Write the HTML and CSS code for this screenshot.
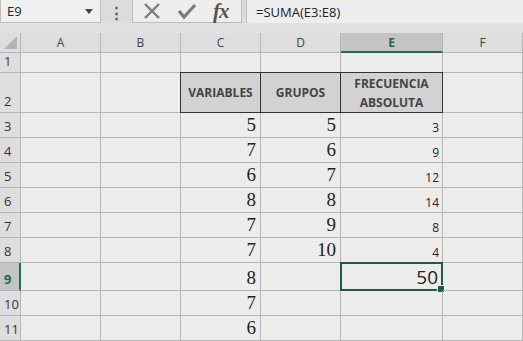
FILE: index.html
```html
<!doctype html>
<html lang="es">
<head>
    <meta charset="UTF-8">
    <title>Hoja de cálculo</title>
    <link rel="stylesheet" href="styles.css">
</head>
<body>
<div class="app">
    <div class="formula-bar">
        <div class="name-box">
            <span>E9</span>
            <svg class="caret" width="8" height="5" viewBox="0 0 8 5"><path d="M0 0h8L4 5z" fill="#444"/></svg>
        </div>
        <div class="dots">&#8942;</div>
        <div class="actions">
            <svg class="icon" width="18" height="18" viewBox="0 0 18 18"><path d="M2 2L16 16M16 2L2 16" stroke="#7a7a7a" stroke-width="2.4"/></svg>
            <svg class="icon" width="20" height="18" viewBox="0 0 20 18"><path d="M2 9l5 6L18 3" stroke="#7a7a7a" stroke-width="3.2" fill="none"/></svg>
            <span class="fx">fx</span>
        </div>
        <div class="formula">=SUMA(E3:E8)</div>
    </div>

    <div class="sheet">
        <div class="corner"><svg width="13" height="13" viewBox="0 0 13 13"><path d="M13 0V13H0z" fill="#b3b3b3"/></svg></div>
        <div class="col-head">A</div>
        <div class="col-head">B</div>
        <div class="col-head">C</div>
        <div class="col-head">D</div>
        <div class="col-head active">E</div>
        <div class="col-head">F</div>

        <div class="row-head">1</div>
        <div class="cell"></div><div class="cell"></div><div class="cell"></div><div class="cell"></div><div class="cell"></div><div class="cell"></div>

        <div class="row-head">2</div>
        <div class="cell"></div><div class="cell"></div>
        <div class="cell title first">VARIABLES</div>
        <div class="cell title">GRUPOS</div>
        <div class="cell title">FRECUENCIA<br>ABSOLUTA</div>
        <div class="cell"></div>

        <div class="row-head">3</div>
        <div class="cell"></div><div class="cell"></div>
        <div class="cell serif">5</div><div class="cell serif">5</div><div class="cell small">3</div><div class="cell"></div>

        <div class="row-head">4</div>
        <div class="cell"></div><div class="cell"></div>
        <div class="cell serif">7</div><div class="cell serif">6</div><div class="cell small">9</div><div class="cell"></div>

        <div class="row-head">5</div>
        <div class="cell"></div><div class="cell"></div>
        <div class="cell serif">6</div><div class="cell serif">7</div><div class="cell small">12</div><div class="cell"></div>

        <div class="row-head">6</div>
        <div class="cell"></div><div class="cell"></div>
        <div class="cell serif">8</div><div class="cell serif">8</div><div class="cell small">14</div><div class="cell"></div>

        <div class="row-head">7</div>
        <div class="cell"></div><div class="cell"></div>
        <div class="cell serif">7</div><div class="cell serif">9</div><div class="cell small">8</div><div class="cell"></div>

        <div class="row-head">8</div>
        <div class="cell"></div><div class="cell"></div>
        <div class="cell serif">7</div><div class="cell serif">10</div><div class="cell small">4</div><div class="cell"></div>

        <div class="row-head active">9</div>
        <div class="cell"></div><div class="cell"></div>
        <div class="cell serif">8</div><div class="cell"></div>
        <div class="cell selected">50<span class="handle"></span></div>
        <div class="cell"></div>

        <div class="row-head">10</div>
        <div class="cell"></div><div class="cell"></div>
        <div class="cell serif">7</div><div class="cell"></div><div class="cell"></div><div class="cell"></div>

        <div class="row-head">11</div>
        <div class="cell"></div><div class="cell"></div>
        <div class="cell serif">6</div><div class="cell"></div><div class="cell"></div><div class="cell"></div>
    </div>
</div>
</body>
</html>
```

FILE: styles.css
```css
body {
    margin: 0;
    overflow: hidden;
    font-family: "Open Sans", "Liberation Sans", sans-serif;
    background: #e2e2e2;
}

.app {
    width: 523px;
    height: 341px;
    overflow: hidden;
}

.formula-bar {
    display: flex;
    align-items: stretch;
    height: 23px;
    margin-bottom: 10px;
    background: #dcdcdc;
}

.name-box {
    display: flex;
    align-items: center;
    justify-content: space-between;
    width: 101px;
    padding: 0 7px 0 6px;
    box-sizing: border-box;
    background: #f0f0f0;
    border: 1px solid #bdbdbd;
    border-top: none;
    font-size: 13px;
    color: #222;
}

.dots {
    display: flex;
    align-items: center;
    justify-content: center;
    width: 31px;
    font-size: 15px;
    font-weight: bold;
    color: #555;
}

.actions {
    display: flex;
    align-items: center;
    gap: 16px;
    width: 110px;
    padding-left: 10px;
    box-sizing: border-box;
    background: #eeeeee;
    border: 1px solid #bdbdbd;
    border-top: none;
}

.fx {
    font-family: "Liberation Serif", serif;
    font-style: italic;
    font-weight: bold;
    font-size: 21px;
    color: #555;
    letter-spacing: -1px;
}

.formula {
    flex: 1;
    display: flex;
    align-items: center;
    margin-left: 4px;
    padding-left: 9px;
    background: #eeeeee;
    border-left: 1px solid #bdbdbd;
    font-size: 13px;
    color: #222;
}

.sheet {
    display: grid;
    grid-template-columns: 21px 80px 80px 80px 80px 102px 80px;
    grid-template-rows: 20px 20px 40px repeat(6, 25px) 28px 25px 25px;
    background: #ececec;
}

.corner,
.col-head,
.row-head,
.cell {
    box-sizing: border-box;
    border-right: 1px solid #b6b6b6;
    border-bottom: 1px solid #b6b6b6;
}

.corner {
    display: flex;
    align-items: flex-end;
    justify-content: flex-end;
    padding: 0 3px 3px 0;
    background: #dedede;
}

.col-head {
    display: flex;
    align-items: center;
    justify-content: center;
    background: #dedede;
    font-size: 12px;
    color: #444;
}

.col-head.active {
    background: #c4c4c4;
    border-bottom: 2px solid #217346;
    color: #1d6b3f;
    font-weight: bold;
}

.row-head {
    display: flex;
    align-items: flex-end;
    padding: 0 0 2px 4px;
    background: #dedede;
    font-size: 13px;
    color: #333;
}

.row-head.active {
    background: #c4c4c4;
    border-right: 2px solid #217346;
    color: #1d6b3f;
    font-weight: bold;
}

.cell {
    display: flex;
    align-items: flex-end;
    justify-content: flex-end;
    padding: 0 4px 3px 0;
    position: relative;
}

.title {
    align-items: center;
    justify-content: center;
    padding: 0;
    text-align: center;
    background: #d2d2d2;
    border-top: 1px solid #333;
    border-right: 1px solid #333;
    border-bottom: 1px solid #333;
    margin-top: -1px;
    font-size: 12px;
    font-weight: bold;
    line-height: 19px;
    color: #444;
}

.title.first {
    border-left: 1px solid #333;
    margin-left: -1px;
}

.serif {
    font-family: "Liberation Serif", serif;
    font-size: 19px;
    color: #222;
    padding-bottom: 1px;
}

.small {
    font-size: 12px;
    color: #222;
    padding-right: 3px;
    padding-bottom: 1px;
}

.selected {
    border: 2px solid #1e5c3a;
    margin: -1px 0 0 -1px;
    font-size: 19px;
    color: #222;
    padding: 0 3px 0 0;
    align-items: center;
}

.handle {
    position: absolute;
    right: -4px;
    bottom: -4px;
    width: 6px;
    height: 6px;
    background: #1e5c3a;
    border: 1px solid #ececec;
}
```
